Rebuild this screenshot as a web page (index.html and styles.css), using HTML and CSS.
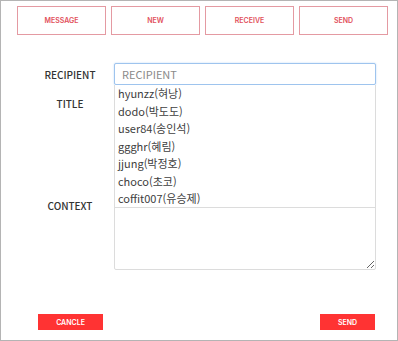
FILE: index.html
```html
<!DOCTYPE html>
<html lang="ko">
<head>
    <meta charset="UTF-8">
    <meta name="viewport" content="width=device-width, initial-scale=1.0">
    <title>쪽지 보내기</title>
    <link rel="stylesheet" href="styles.css">
</head>
<body>
    <div class="frame">
        <div class="tabs">
            <button class="tab">MESSAGE</button>
            <button class="tab">NEW</button>
            <button class="tab">RECEIVE</button>
            <button class="tab">SEND</button>
        </div>

        <form class="write-form">
            <label class="field-label">RECIPIENT</label>
            <div class="recipient-box">
                <input class="text-input focused" type="text" placeholder="RECIPIENT">
                <!-- 받는 사람 자동완성 목록 -->
                <ul class="suggest-list">
                    <li class="suggest-item">hyunzz(혀낭)</li>
                    <li class="suggest-item">dodo(박도도)</li>
                    <li class="suggest-item">user84(송인석)</li>
                    <li class="suggest-item">ggghr(혜림)</li>
                    <li class="suggest-item">jjung(박정호)</li>
                    <li class="suggest-item">choco(초코)</li>
                    <li class="suggest-item">coffit007(유승제)</li>
                </ul>
            </div>

            <label class="field-label">TITLE</label>
            <input class="text-input" type="text">

            <label class="field-label context-label">CONTEXT</label>
            <textarea class="context-input"></textarea>
        </form>

        <div class="actions">
            <button class="action-btn">CANCLE</button>
            <button class="action-btn">SEND</button>
        </div>
    </div>
</body>
</html>
```

FILE: styles.css
```css
* {
    box-sizing: border-box;
}

body {
    margin: 0;
    background: #fff;
    font-family: 'Noto Sans CJK KR', 'Noto Sans', sans-serif;
}

.frame {
    width: 398px;
    height: 341px;
    border: 1px solid #b4b4b4;
    background: #fff;
}

/* 상단 탭 */
.tabs {
    display: flex;
    gap: 5px;
    padding: 5px 0 0 16px;
}

.tab {
    width: 89px;
    height: 29px;
    border: 1px solid #e49aa2;
    background: #fff;
    color: #e2515c;
    font-family: 'Inter', 'Noto Sans', sans-serif;
    font-size: 7px;
    font-weight: 600;
    padding: 0;
    cursor: pointer;
}

/* 작성 폼 */
.write-form {
    display: grid;
    grid-template-columns: 80px 262px;
    column-gap: 4px;
    row-gap: 7px;
    align-items: center;
    margin-top: 28px;
    padding-left: 29px;
}

.field-label {
    text-align: center;
    font-size: 10px;
    font-weight: 500;
    color: #333;
}

.recipient-box {
    position: relative;
}

.text-input {
    display: block;
    width: 262px;
    height: 22px;
    border: 1px solid #d8d8d8;
    border-radius: 2px;
    padding: 0 7px;
    font-family: inherit;
    font-size: 11px;
    color: #333;
    outline: none;
}

.text-input::placeholder {
    color: #8a8a8a;
}

.text-input.focused {
    border-color: #9ec4ee;
    box-shadow: 0 0 2px #bcd7f5;
}

.suggest-list {
    position: absolute;
    top: 100%;
    left: 0;
    z-index: 2;
    width: 262px;
    height: 123px;
    margin: 0;
    padding: 0;
    list-style: none;
    background: #fff;
    border: 1px solid #dcdcdc;
    border-top: none;
}

.suggest-item {
    height: 17.5px;
    line-height: 17.5px;
    padding-left: 3px;
    font-size: 11px;
    color: #404040;
}

.context-label,
.context-input {
    margin-top: 19px;
}

.context-input {
    display: block;
    width: 262px;
    height: 130px;
    border: 1px solid #dcdcdc;
    border-radius: 2px;
    font-family: inherit;
}

/* 하단 버튼 */
.actions {
    display: flex;
    justify-content: space-between;
    margin-top: 44px;
    padding: 0 22px 0 37px;
}

.action-btn {
    height: 16px;
    padding: 0;
    width: 65px;
    border: none;
    background: #ff3333;
    color: #fff;
    font-family: 'Inter', 'Noto Sans', sans-serif;
    font-size: 7px;
    font-weight: 600;
    cursor: pointer;
}

.action-btn:last-child {
    width: 55px;
}
```
